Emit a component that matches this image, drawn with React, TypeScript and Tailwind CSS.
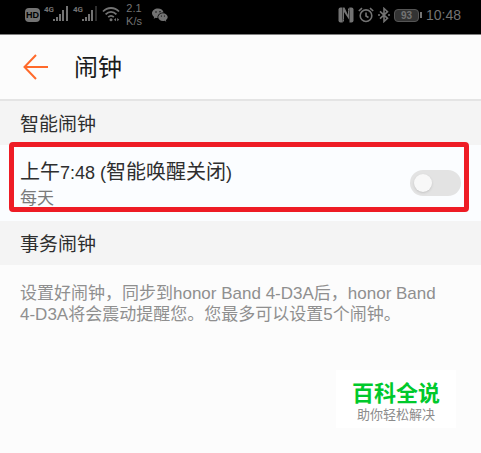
import React from 'react'

const SignalBars: React.FC<{ dimLast?: boolean }> = ({ dimLast }) => (
  <div className="flex items-start">
    <span className="w-[9px] text-[8px] leading-[8px] font-bold font-['Roboto',sans-serif]">4G</span>
    <svg className="w-4 h-[15px]" viewBox="0 0 16 15" fill="currentColor">
      <rect x="0" y="13" width="2" height="2" />
      <rect x="3" y="11" width="2" height="4" />
      <rect x="6" y="8" width="2" height="7" />
      <rect x="9" y="4" width="2" height="11" />
      <rect x="13" y="0" width="2" height="15" opacity={dimLast ? 0.4 : 1} />
    </svg>
  </div>
)

const WifiIcon: React.FC = () => (
  <svg className="w-[18px] h-4" viewBox="0 0 18 16" fill="none" stroke="currentColor" strokeWidth="1.8">
    <path d="M1 5.5C5.5 0.8 12.5 0.8 17 5.5" />
    <path d="M3.6 8.4C6.8 5.2 11.2 5.2 14.4 8.4" />
    <path d="M6.2 11.1C7.9 9.4 10.1 9.4 11.8 11.1" />
    <circle cx="9" cy="13.7" r="1.5" fill="currentColor" stroke="none" />
    <path d="M12 13.7l2-1.6v3.2zM17.2 13.7l-2-1.6v3.2z" fill="currentColor" stroke="none" />
  </svg>
)

const WechatIcon: React.FC = () => (
  <svg className="w-4 h-[14px]" viewBox="0 0 16 14" fill="currentColor">
    <path d="M6 0.5C2.7 0.5 0 2.6 0 5.3c0 1.5 0.9 2.8 2.2 3.7L1.7 10.8l2-1c0.6 0.2 1.2 0.3 1.9 0.3C5 7 7.5 4.4 11.6 4.4 11 2.2 8.8 0.5 6 0.5Z" />
    <path d="M10.9 5.2C8.1 5.2 6.2 7 6.2 9.1s2 4 4.7 4c0.6 0 1.2-0.1 1.7-0.3l1.7 0.9-0.5-1.5c1.1-0.7 1.9-1.8 1.9-3.1 0-2.1-2.1-3.9-4.8-3.9Z" />
    <g fill="#000">
      <circle cx="4" cy="4" r="0.7" />
      <circle cx="8" cy="3.8" r="0.7" />
      <circle cx="9.4" cy="8" r="0.6" />
      <circle cx="12.5" cy="8" r="0.6" />
    </g>
  </svg>
)

const NfcIcon: React.FC = () => (
  <svg className="w-4 h-4" viewBox="0 0 16 16" fill="currentColor">
    <path d="M2.5 0.5H4.5V15.5H2.5Q0.5 15.5 0.5 13.5V2.5Q0.5 0.5 2.5 0.5Z" />
    <path d="M11.5 0.5H13.5Q15.5 0.5 15.5 2.5V13.5Q15.5 15.5 13.5 15.5H11.5Z" />
    <path d="M5 0.5H6.5L10 8V3.5H11V12.5L6 5V12.5H5Z" />
    <path d="M4.5 12.5H6V14L4.5 15.5ZM10 3.5V2L11.5 0.5V3.5Z" />
  </svg>
)

const AlarmIcon: React.FC = () => (
  <svg className="w-4 h-4" viewBox="0 0 16 16" fill="none" stroke="currentColor" strokeWidth="1.6">
    <circle cx="8" cy="8.7" r="5.8" />
    <path d="M8 5.5v3.5l2.5 1.5M0.8 4L4 1.2M15.2 4L12 1.2" />
  </svg>
)

const BluetoothIcon: React.FC = () => (
  <svg className="w-3 h-4" viewBox="0 0 12 16" fill="none" stroke="currentColor" strokeWidth="1.6">
    <path d="M2 4.3l7.5 7L6 14.5v-13l3.5 3.2L2 11.7" />
    <circle cx="1" cy="8" r="1" fill="currentColor" stroke="none" />
    <circle cx="11" cy="8" r="1" fill="currentColor" stroke="none" />
  </svg>
)

const StatusBar: React.FC = () => (
  <header className="flex items-start justify-between h-[34px] pl-[25px] pr-5 bg-black text-[#737373]">
    <div className="flex items-start gap-1">
      <span className="w-[15px] mt-2 rounded-sm bg-current text-center">
        <span className="block text-[9px] leading-[14px] font-bold text-black">HD</span>
      </span>
      <div className="flex gap-1 mt-[6px]">
        <SignalBars />
        <SignalBars dimLast />
      </div>
      <div className="mt-[6px]">
        <WifiIcon />
      </div>
      <div className="w-5 mt-[2px] text-[11px] leading-[13px] text-center">
        <div>2.1</div>
        <div>K/s</div>
      </div>
      <div className="mt-2 ml-1">
        <WechatIcon />
      </div>
    </div>
    <div className="flex items-center gap-1 mt-[5px]">
      <NfcIcon />
      <AlarmIcon />
      <BluetoothIcon />
      <div className="flex items-center gap-px">
        <span className="w-[25px] h-[13px] rounded-sm border border-[#555555] bg-[#333333] text-[10px] leading-[11px] font-bold text-center">93</span>
        <span className="w-[2px] h-[6px] bg-current" />
      </div>
      <span className="text-[14px] leading-5">10:48</span>
    </div>
  </header>
)

const SectionTitle: React.FC<{ children: React.ReactNode }> = ({ children }) => (
  <h2 className="h-11 px-5 bg-[#f4f4f4] text-[19px] leading-[48px] text-[#2e2e2e]">{children}</h2>
)

const App: React.FC = () => {
  return (
    <div className="min-h-screen bg-[#fcfcfc] font-['Liberation_Sans','Noto_Sans_CJK_SC',sans-serif]">
      <StatusBar />

      {/* Title bar */}
      <div className="flex items-center gap-[26px] h-[67px] px-5 border-t border-b-2 border-t-[#808080] border-b-[#e4e4e4]">
        <button type="button" aria-label="返回" className="pl-[3px] text-[#ff6a2b]">
          <svg className="w-[25px] h-[26px]" viewBox="0 0 25 26" fill="none" stroke="currentColor" strokeWidth="2">
            <path d="M25 13H1.5M13 1L1.5 13L13 25" />
          </svg>
        </button>
        <h1 className="pt-[2px] text-[24px] leading-8 text-[#1a1a1a]">闹钟</h1>
      </div>

      <SectionTitle>智能闹钟</SectionTitle>
      <div className="relative flex items-center justify-between h-[76px] px-5 bg-[#fbfdff]">
        <label htmlFor="smart-alarm" className="pt-[2px]">
          <span className="block text-[20px] leading-7 text-[#2e2e2e]">
            上午<span className="text-[18px]">7:48 (</span>智能唤醒关闭<span className="text-[18px]">)</span>
          </span>
          <span className="block text-[17px] leading-6 text-[#7a7a7a]">每天</span>
        </label>
        <input
          id="smart-alarm"
          type="checkbox"
          role="switch"
          className="appearance-none flex items-center w-[51px] h-[26px] px-1 rounded-full bg-[#e3e3e3] before:block before:w-[18px] before:h-[18px] before:rounded-full before:bg-[#f8f8f8] before:shadow checked:bg-[#ff6a2b] checked:justify-end"
        />
        <div className="absolute left-[9px] right-3 -top-[3px] bottom-[9px] rounded-sm border-[5px] border-[#ee1c25] pointer-events-none" />
      </div>

      <SectionTitle>事务闹钟</SectionTitle>
      <p className="px-5 pt-[18px] text-[17px] leading-[21px] text-[#8f8f8f]">
        设置好闹钟，同步到honor Band 4-D3A后，honor Band <span className="whitespace-nowrap">4-D3A</span>将会震动提醒您。您最多可以设置5个闹钟。
      </p>

      {/* Brand badge */}
      <div className="fixed right-[25px] bottom-[25px] w-[120px] pt-3 pb-1 bg-white text-center">
        <div className="text-[22px] leading-6 font-bold text-[#00c92c]">百科全说</div>
        <div className="text-[13px] leading-[18px] text-[#8c8c8c]">助你轻松解决</div>
      </div>
    </div>
  )
}

export default App
